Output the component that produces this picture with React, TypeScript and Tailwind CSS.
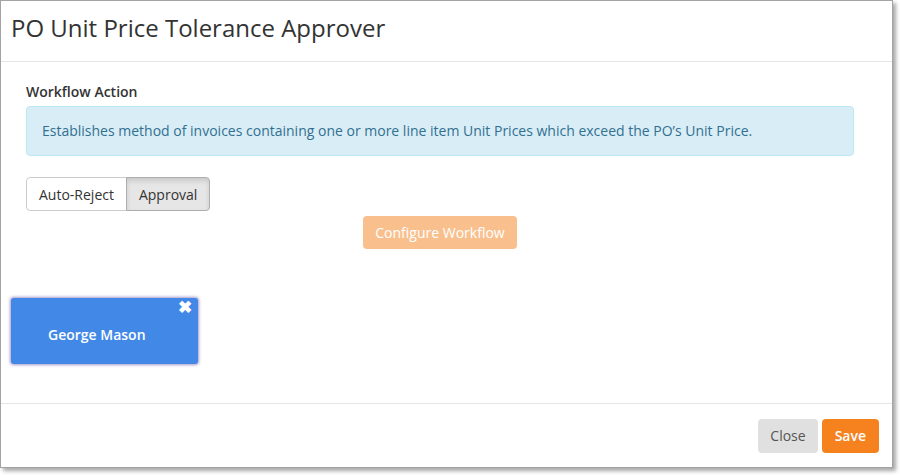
export default function App() {
  return (
    <div className="w-[900px] h-[475px] bg-white font-['Open_Sans',sans-serif] text-[#333]">
      <div className="w-[893px] h-[468px] flex flex-col border border-[#a3a3a3] bg-white shadow-[3px_3px_4px_rgba(0,0,0,0.35)]">
        {/* Header */}
        <div className="h-[61px] shrink-0 border-b border-[#e5e5e5] pl-[10px] pt-[11px]">
          <h1 className="text-[24px] leading-[32px] font-normal text-[#333]">
            PO Unit Price Tolerance Approver
          </h1>
        </div>

        {/* Body */}
        <div className="flex-1 flex flex-col pl-[25px] pr-[38px] pt-[20px]">
          <div className="text-[14px] leading-[20px] font-semibold text-[#333]">Workflow Action</div>
          <div className="mt-[4px] rounded-[4px] border border-[#bce8f1] bg-[#d9edf7] px-[15px] py-[14px] text-[14px] leading-[20px] text-[#31708f]">
            Establishes method of invoices containing one or more line item Unit Prices which exceed the PO’s Unit Price.
          </div>

          <div className="mt-[21px] flex">
            <button className="h-[34px] px-[12px] text-[14px] text-[#333] bg-white border border-[#ccc] rounded-l-[4px]">
              Auto-Reject
            </button>
            <button className="h-[34px] px-[12px] -ml-px text-[14px] text-[#333] bg-[#e6e6e6] border border-[#adadad] rounded-r-[4px] shadow-[inset_0_3px_5px_rgba(0,0,0,0.125)]">
              Approval
            </button>
          </div>

          <div className="mt-[5px] flex justify-center">
            <button className="h-[33px] px-[12px] rounded-[4px] bg-[#f9c08e] text-white text-[14px] font-medium">
              Configure Workflow
            </button>
          </div>

          <div className="mt-[49px] -ml-[15px] relative w-[187px] h-[66px] rounded-[3px] bg-[#4288e6] shadow-[0_0_3px_1px_rgba(90,70,160,0.55)] flex items-center pl-[37px] pt-[6px]">
            <span className="text-white text-[14px] font-semibold">George Mason</span>
            <span className="absolute right-[6px] top-[0px] text-white text-[17px] leading-[17px] font-bold">✖</span>
          </div>
        </div>

        {/* Footer */}
        <div className="h-[64px] shrink-0 border-t border-[#e5e5e5] flex items-center justify-end gap-[4px] pr-[13px]">
          <button className="h-[34px] px-[12px] rounded-[4px] bg-[#e0e0e0] text-[#555] text-[14px]">Close</button>
          <button className="h-[34px] px-[13px] rounded-[4px] bg-[#f5821f] text-white text-[14px] font-semibold">Save</button>
        </div>
      </div>
    </div>
  );
}
